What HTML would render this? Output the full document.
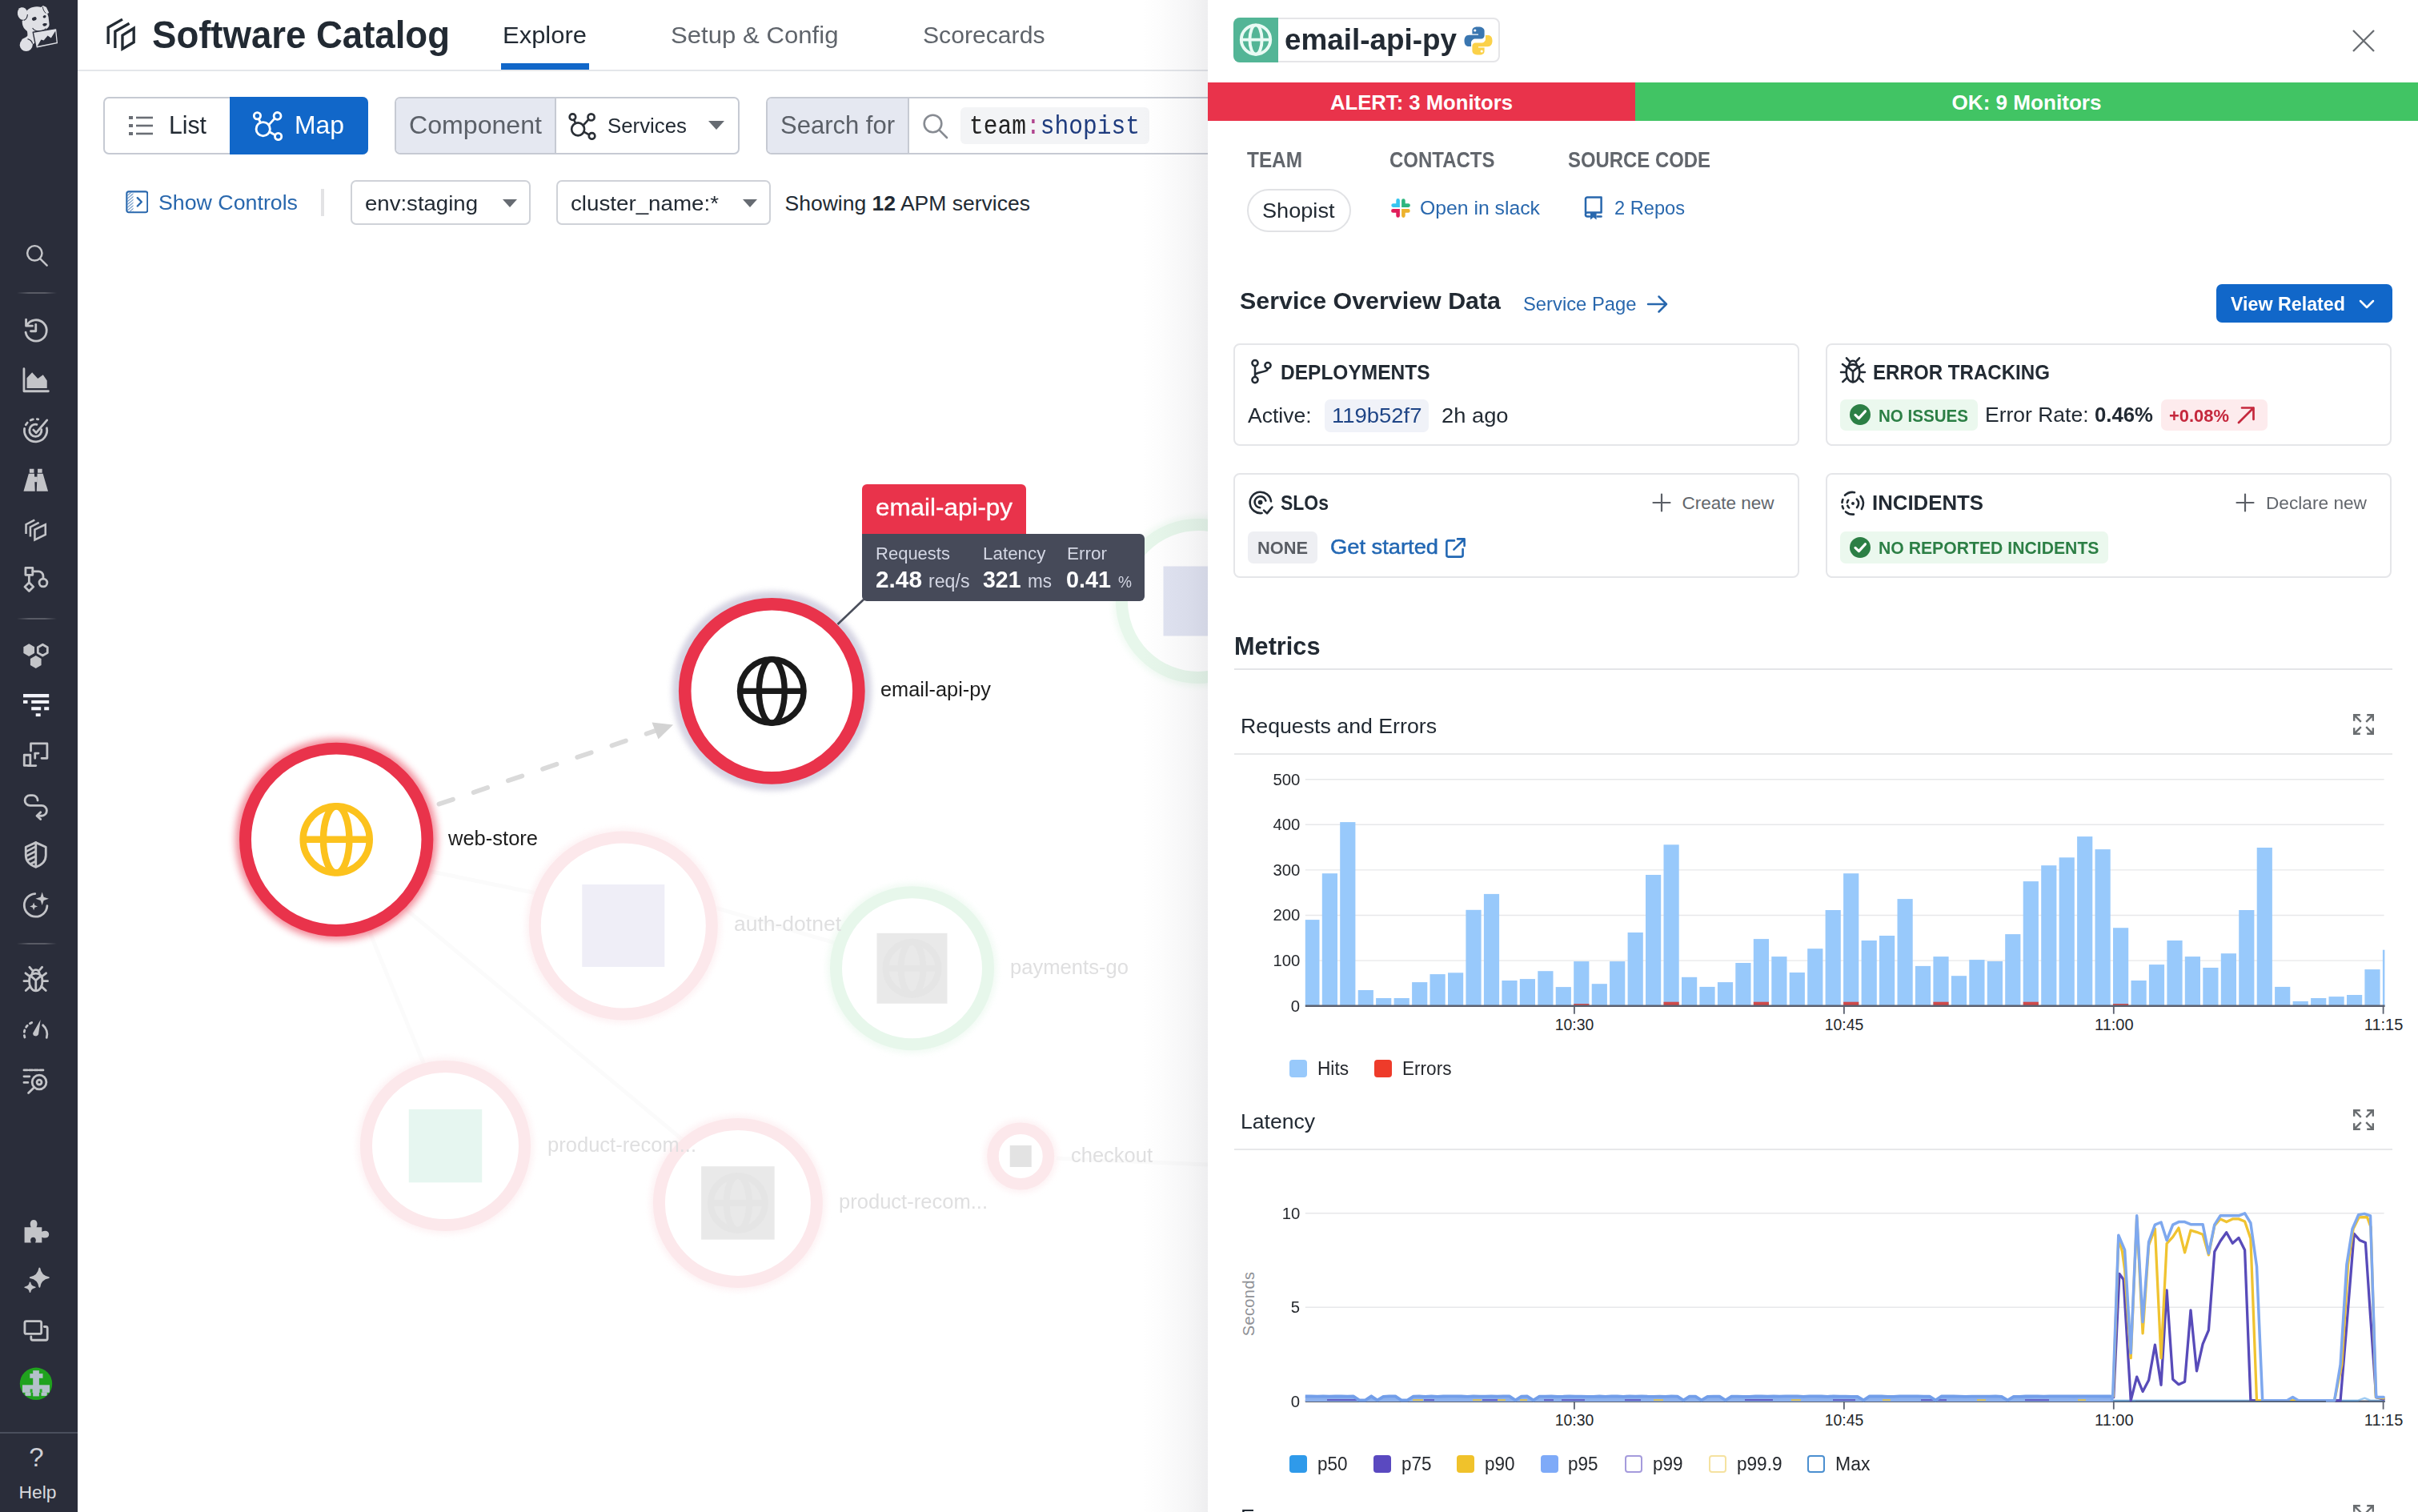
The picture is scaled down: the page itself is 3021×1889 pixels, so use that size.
<!DOCTYPE html>
<html><head><meta charset="utf-8"><title>Software Catalog</title>
<style>
html,body{margin:0;padding:0;}
body{width:3021px;height:1889px;overflow:hidden;background:#fff;position:relative;font-family:"Liberation Sans",sans-serif;}
body>div,body>span,body>svg{position:absolute;box-sizing:border-box;}
body>span{white-space:nowrap;line-height:normal;}
b{font-weight:700;}
</style></head><body>
<div style="left:0.0px;top:0.0px;width:97.0px;height:1889.0px;background:#2a2d3a;"></div>
<svg style="left:0.0px;top:0.0px;" width="97" height="80" viewBox="0 0 97 80">
<g fill="#dfe0e5">
<ellipse cx="28.2" cy="17" rx="6.3" ry="7.9" transform="rotate(-12 28.2 17)"/>
<path d="M33.5 13.6 C35.5 11 38.5 9.6 41 9 C44 8.2 48 8 51.3 9.1 L53.8 7 L57.9 9.1 L61.2 16.1 L59.1 17 C60.2 19.5 60.8 21.5 60.8 23.2 L61.6 30.6 C61.4 32.4 61 33.4 60.4 33.9 L57.9 36.4 L50 41 L45 41.5 L44 53 L40 56 L27 52 L27.5 49 C30 47.5 33 46.5 34.3 44.7 C34.6 42.5 34.2 40.5 33.9 38.9 C31 36.5 29.3 35 28.9 33.1 C28 31 27.6 28.5 27.7 26 C30 25.5 32.5 23 33.8 20 Z"/>
<ellipse cx="32.7" cy="56.2" rx="8" ry="7.9"/>
</g>
<path d="M34.5 48.6 C37.6 49.4 39.8 51.6 40.6 54.6" fill="none" stroke="#2a2d3a" stroke-width="1.2"/>
<path d="M34.4 18 C34.2 21.5 32.4 24.4 29.8 25.4" fill="none" stroke="#2a2d3a" stroke-width="1.1"/>
<path d="M53.4 8.6 C53.6 11.5 55 14.5 57.4 16.6" fill="none" stroke="#2a2d3a" stroke-width="1"/>
<ellipse cx="42.8" cy="23.5" rx="2.9" ry="2.2" fill="#2a2d3a" transform="rotate(-20 42.8 23.5)"/>
<ellipse cx="55.6" cy="20.8" rx="2" ry="1.7" fill="#2a2d3a" transform="rotate(-20 55.6 20.8)"/>
<path d="M53.2 30.2 C54.6 28.8 57.6 28.6 59 29.8 C58.4 31.8 56.6 33 55.4 32.8 C54.2 32.6 53.4 31.6 53.2 30.2 Z" fill="#2a2d3a"/>
<path d="M40.6 35 C42.6 38 46.6 39.6 51 38.8 C54 38.2 56.4 37.2 57.4 35.4" fill="none" stroke="#2a2d3a" stroke-width="1.1"/>
<path d="M41.2 40.2 L70.8 35.4 L72.8 54.8 L45.2 60.4 Z" fill="#dfe0e5" stroke="#2a2d3a" stroke-width="1.4" stroke-linejoin="round"/>
<path d="M46.6 57.8 L51.4 49.4 L54.6 50.6 L59.6 44.6 L63.8 47.6 L69.2 38.8 L70.6 53 Z" fill="#2a2d3a"/>
</svg>
<svg style="left:27.5px;top:301.2px;" width="35" height="35" viewBox="0 0 24 24"><circle cx="10.5" cy="10.5" r="6.3" fill="none" stroke="#c3c4c8" stroke-width="1.7" stroke-linecap="round" stroke-linejoin="round" stroke-width="1.9"/><path d="M15.3 15.3 L21 21" fill="none" stroke="#c3c4c8" stroke-width="1.7" stroke-linecap="round" stroke-linejoin="round" stroke-width="1.9"/></svg>
<div style="left:21.0px;top:364.5px;width:50.0px;height:2.0px;background:linear-gradient(90deg,rgba(255,255,255,0),rgba(255,255,255,.22) 30%,rgba(255,255,255,.22) 70%,rgba(255,255,255,0));"></div>
<svg style="left:25.2px;top:393.2px;" width="39.5" height="39.5" viewBox="0 0 24 24"><path d="M5.2 8.2 A8 8 0 1 1 4.3 13.5" fill="none" stroke="#c3c4c8" stroke-width="1.7" stroke-linecap="round" stroke-linejoin="round"/><path d="M4.6 3.8 V8.6 H9.4" fill="none" stroke="#c3c4c8" stroke-width="1.7" stroke-linecap="round" stroke-linejoin="round"/><path d="M12 7.5 V12.6 H8.2" fill="none" stroke="#c3c4c8" stroke-width="1.7" stroke-linecap="round" stroke-linejoin="round"/></svg>
<svg style="left:25.2px;top:455.2px;" width="39.5" height="39.5" viewBox="0 0 24 24"><path d="M3 3.5 V20.5 H21.5" fill="none" stroke="#c3c4c8" stroke-width="1.7" stroke-linecap="round" stroke-linejoin="round" stroke-width="1.5"/><path d="M5.2 18.3 V10.5 L9.2 6.2 L13.5 11 L17.5 8 L20.5 12.5 V18.3 Z" fill="#c3c4c8"/></svg>
<svg style="left:25.2px;top:518.2px;" width="39.5" height="39.5" viewBox="0 0 24 24"><path d="M20.3 10.2 A8.6 8.6 0 1 1 13.8 3.6" fill="none" stroke="#c3c4c8" stroke-width="1.7" stroke-linecap="round" stroke-linejoin="round" stroke-dasharray="30 3 2 3 2 3 40"/><path d="M16.3 11.3 A4.6 4.6 0 1 1 12.7 7.5" fill="none" stroke="#c3c4c8" stroke-width="1.7" stroke-linecap="round" stroke-linejoin="round"/><path d="M10.2 11.6 L12.3 13.8 L20.5 4.2" fill="none" stroke="#c3c4c8" stroke-width="1.7" stroke-linecap="round" stroke-linejoin="round"/></svg>
<svg style="left:25.2px;top:580.2px;" width="39.5" height="39.5" viewBox="0 0 24 24"><path d="M7.2 3.5 h3.4 v3 h-3.4z M13.4 3.5 h3.4 v3 h-3.4z" fill="#c3c4c8"/><path d="M6.6 7.2 h4.3 l.5 13.3 h-8.7 z M13.1 7.2 h4.3 l3.9 13.3 h-8.7 z" fill="#c3c4c8"/><path d="M10.8 9.5 h2.4 v4 h-2.4z" fill="#c3c4c8"/></svg>
<svg style="left:28.0px;top:644.6px;" width="34" height="34" viewBox="0 0 24 24"><g fill="none" stroke="#c3c4c8" stroke-width="1.8" stroke-linejoin="miter"><path d="M3.2 15.5 V7.2 L10.8 3.2"/><path d="M7 18 V9.5 L14.6 5.5"/><path d="M10.9 11.8 L20.3 7.3 V16.2 L10.9 20.8 Z"/></g></svg>
<svg style="left:25.2px;top:704.2px;" width="39.5" height="39.5" viewBox="0 0 24 24"><rect x="4.2" y="3.3" width="5.4" height="5.4" fill="none" stroke="#c3c4c8" stroke-width="1.7" stroke-linecap="round" stroke-linejoin="round"/><path d="M6.9 8.7 V14.2" fill="none" stroke="#c3c4c8" stroke-width="1.7" stroke-linecap="round" stroke-linejoin="round"/><path d="M6.9 14.4 L10.2 17.7 L6.9 21 L3.6 17.7 Z" fill="none" stroke="#c3c4c8" stroke-width="1.7" stroke-linecap="round" stroke-linejoin="round"/><path d="M9.6 6 H14 A3.6 3.6 0 0 1 17.6 9.6 V11.4" fill="none" stroke="#c3c4c8" stroke-width="1.7" stroke-linecap="round" stroke-linejoin="round"/><circle cx="17.6" cy="14.6" r="3" fill="none" stroke="#c3c4c8" stroke-width="1.7" stroke-linecap="round" stroke-linejoin="round"/></svg>
<div style="left:21.0px;top:771.5px;width:50.0px;height:2.0px;background:linear-gradient(90deg,rgba(255,255,255,0),rgba(255,255,255,.22) 30%,rgba(255,255,255,.22) 70%,rgba(255,255,255,0));"></div>
<svg style="left:25.2px;top:798.8px;" width="39.5" height="39.5" viewBox="0 0 24 24"><polygon points="10.96,10.40 6.80,12.80 2.64,10.40 2.64,5.60 6.80,3.20 10.96,5.60" fill="#c3c4c8"/><polygon points="20.84,10.10 17.20,12.20 13.56,10.10 13.56,5.90 17.20,3.80 20.84,5.90" fill="none" stroke="#c3c4c8" stroke-width="1.7" stroke-linecap="round" stroke-linejoin="round"/><polygon points="16.16,19.40 12.00,21.80 7.84,19.40 7.84,14.60 12.00,12.20 16.16,14.60" fill="#c3c4c8"/></svg>
<svg style="left:29.0px;top:867.0px;" width="33" height="29" viewBox="0 0 33 29"><g fill="#f3f4fb"><rect x="0" y="0" width="32.2" height="4.3"/><rect x="0" y="7.9" width="5.5" height="4"/><rect x="10.2" y="7.9" width="22" height="4"/><rect x="10.2" y="16.2" width="12" height="4.1"/><rect x="26.2" y="16.2" width="6" height="4.1"/><rect x="15.7" y="24.3" width="6" height="3.8"/></g></svg>
<svg style="left:25.2px;top:923.2px;" width="39.5" height="39.5" viewBox="0 0 24 24"><path d="M8.2 9.2 V3.6 H20.6 V14.8 H16.4" fill="none" stroke="#c3c4c8" stroke-width="1.7" stroke-linecap="round" stroke-linejoin="round" stroke-linejoin="miter"/><path d="M12 20.4 H6.2" fill="none" stroke="#c3c4c8" stroke-width="1.7" stroke-linecap="round" stroke-linejoin="round"/><rect x="3.2" y="12.3" width="4.6" height="8" fill="none" stroke="#c3c4c8" stroke-width="1.7" stroke-linecap="round" stroke-linejoin="round" stroke-linejoin="miter"/><path d="M11.4 14.8 V11 H14" fill="none" stroke="#c3c4c8" stroke-width="1.7" stroke-linecap="round" stroke-linejoin="round" stroke-linejoin="miter"/></svg>
<svg style="left:25.2px;top:986.8px;" width="39.5" height="39.5" viewBox="0 0 24 24"><path d="M12 11.8 H7.6 A3.9 3.9 0 0 1 7.6 4 H9.5 A3.9 3.9 0 0 1 13.4 7.9 M12 11.8 H16.4 A3.9 3.9 0 0 1 16.4 19.6 H13.2" fill="none" stroke="#c3c4c8" stroke-width="1.7" stroke-linecap="round" stroke-linejoin="round"/><path d="M15.6 16.8 L12.8 19.6 L15.6 22.2" fill="none" stroke="#c3c4c8" stroke-width="1.7" stroke-linecap="round" stroke-linejoin="round"/></svg>
<svg style="left:25.2px;top:1048.2px;" width="39.5" height="39.5" viewBox="0 0 24 24"><path d="M12 2.8 L19.6 6.2 V12.4 C19.6 16.6 16.4 19.8 12 21.4 C7.6 19.8 4.4 16.6 4.4 12.4 V6.2 Z" fill="none" stroke="#c3c4c8" stroke-width="1.7" stroke-linecap="round" stroke-linejoin="round"/><path d="M12 2.8 V21.4" fill="none" stroke="#c3c4c8" stroke-width="1.7" stroke-linecap="round" stroke-linejoin="round"/><path d="M5 9.5 L11.6 6 M4.8 13 L11.6 9.6 M5.8 16.2 L11.6 13.3 M8.2 19 L11.6 17.2" fill="none" stroke="#c3c4c8" stroke-width="1.7" stroke-linecap="round" stroke-linejoin="round" stroke-width="1.4"/></svg>
<svg style="left:25.2px;top:1110.8px;" width="39.5" height="39.5" viewBox="0 0 24 24"><path d="M20.6 12.6 A8.7 8.7 0 1 1 11.4 3.4" fill="none" stroke="#c3c4c8" stroke-width="1.7" stroke-linecap="round" stroke-linejoin="round"/><path d="M16.8 2.2 L18 5.9 L21.8 7.2 L18 8.5 L16.8 12.2 L15.6 8.5 L11.8 7.2 L15.6 5.9 Z" fill="#c3c4c8"/><path d="M10.4 10 L11.2 12.2 L13.4 13 L11.2 13.8 L10.4 16 L9.6 13.8 L7.4 13 L9.6 12.2 Z" fill="#c3c4c8"/></svg>
<div style="left:21.0px;top:1177.5px;width:50.0px;height:2.0px;background:linear-gradient(90deg,rgba(255,255,255,0),rgba(255,255,255,.22) 30%,rgba(255,255,255,.22) 70%,rgba(255,255,255,0));"></div>
<svg style="left:25.2px;top:1204.2px;" width="39.5" height="39.5" viewBox="0 0 24 24"><g fill="none" stroke="#c3c4c8" stroke-width="1.7" stroke-linecap="round" stroke-linejoin="round"><path d="M12 7.4 C15.4 7.4 17 9.8 17 13.2 C17 17.2 15 20.6 12 20.6 C9 20.6 7 17.2 7 13.2 C7 9.8 8.6 7.4 12 7.4 Z"/><path d="M12 12.6 V20.4 M8 9.2 L12 12.6 L16 9.2"/><path d="M9.3 7.8 C9.3 5.6 10.3 4.6 12 4.6 C13.7 4.6 14.7 5.6 14.7 7.8"/><path d="M9 4.6 L7.2 2.6 M15 4.6 L16.8 2.6"/><path d="M7 13.2 H3 M17 13.2 H21"/><path d="M7.6 9.8 L4.2 7.2 M16.4 9.8 L19.8 7.2"/><path d="M7.8 17.2 L4.4 20.4 M16.2 17.2 L19.6 20.4"/></g></svg>
<svg style="left:25.2px;top:1266.8px;" width="39.5" height="39.5" viewBox="0 0 24 24"><path d="M3.6 17.6 A9 9 0 0 1 10.4 6" fill="none" stroke="#c3c4c8" stroke-width="1.7" stroke-linecap="round" stroke-linejoin="round" stroke-width="2.7" stroke-dasharray="1.5 2.5" stroke-linecap="butt"/><path d="M17.4 8.4 A9 9 0 0 1 20.2 17.8" fill="none" stroke="#c3c4c8" stroke-width="1.7" stroke-linecap="round" stroke-linejoin="round" stroke-width="2.9"/><path d="M9.8 14.4 L15.6 4.2 L14 15.4 A2.2 2.2 0 0 1 9.8 14.4 Z" fill="#c3c4c8"/></svg>
<svg style="left:25.2px;top:1329.8px;" width="39.5" height="39.5" viewBox="0 0 24 24"><path d="M3 4.2 H17.6" fill="none" stroke="#c3c4c8" stroke-width="1.7" stroke-linecap="round" stroke-linejoin="round" stroke-width="2.2" stroke-dasharray="2.6 1.4" stroke-linecap="butt"/><path d="M3 9 H7.2 M3 13.6 H6" fill="none" stroke="#c3c4c8" stroke-width="1.7" stroke-linecap="round" stroke-linejoin="round" stroke-width="2.2" stroke-linecap="butt"/><circle cx="14.6" cy="13.4" r="5.4" fill="none" stroke="#c3c4c8" stroke-width="1.7" stroke-linecap="round" stroke-linejoin="round" stroke-width="1.9"/><circle cx="14.6" cy="13.4" r="1.8" fill="none" stroke="#c3c4c8" stroke-width="1.7" stroke-linecap="round" stroke-linejoin="round" stroke-width="1.4"/><path d="M10.6 17.4 L6.4 21.6" fill="none" stroke="#c3c4c8" stroke-width="1.7" stroke-linecap="round" stroke-linejoin="round" stroke-width="2.2"/></svg>
<svg style="left:25.2px;top:1518.2px;" width="39.5" height="39.5" viewBox="0 0 24 24"><path d="M3.4 9.2 H8.3 C7 6.2 8 3.6 10.4 3.6 C12.8 3.6 13.8 6.2 12.5 9.2 H16.6 V12.6 C19.6 11.3 22 12.3 22 14.7 C22 17.1 19.6 18.1 16.6 16.8 V21 H11.6 C12.6 18.6 11.8 16.8 10 16.8 C8.2 16.8 7.4 18.6 8.4 21 H3.4 Z" fill="#c3c4c8"/></svg>
<svg style="left:25.2px;top:1579.8px;" width="39.5" height="39.5" viewBox="0 0 24 24"><path d="M14.8 2.8 Q15.6 8.6 21.8 9.8 Q15.6 11 14.8 16.8 Q14 11 7.8 9.8 Q14 8.6 14.8 2.8 Z" fill="#c3c4c8" stroke="#c3c4c8" stroke-width="1.2" stroke-linejoin="round"/><path d="M7.6 13.6 Q8 16.6 11.4 17.2 Q8 17.8 7.6 20.8 Q7.2 17.8 3.8 17.2 Q7.2 16.6 7.6 13.6 Z" fill="#c3c4c8" stroke="#c3c4c8" stroke-width="1" stroke-linejoin="round"/></svg>
<svg style="left:25.2px;top:1642.8px;" width="39.5" height="39.5" viewBox="0 0 24 24"><rect x="3.6" y="4.6" width="12.6" height="9.6" rx="1.2" fill="none" stroke="#c3c4c8" stroke-width="1.7" stroke-linecap="round" stroke-linejoin="round" stroke-width="1.5"/><path d="M8.4 16.4 V17.8 A1.2 1.2 0 0 0 9.6 19 H19.6 A1.2 1.2 0 0 0 20.8 17.8 V10 A1.2 1.2 0 0 0 19.6 8.8 H18.4" fill="none" stroke="#c3c4c8" stroke-width="1.7" stroke-linecap="round" stroke-linejoin="round" stroke-width="1.5"/></svg>
<svg style="left:24.0px;top:1708.0px;" width="42" height="42" viewBox="0 0 42 42"><defs><clipPath id="avc"><circle cx="21" cy="20.8" r="20"/></clipPath></defs><circle cx="21" cy="20.8" r="20.2" fill="#20a21e"/>
<g fill="#b4c1ca" clip-path="url(#avc)"><rect x="17.2" y="4.2" width="7.7" height="19"/><rect x="13.3" y="8.1" width="16.2" height="5.7"/><rect x="4" y="22.3" width="34" height="9.5"/><rect x="7.4" y="31.5" width="7.2" height="4.4"/><rect x="27.5" y="31.5" width="7.2" height="4.4"/><rect x="17.2" y="30" width="7.7" height="6.4"/></g>
<g fill="#2aad28"><rect x="13.6" y="27.4" width="3" height="4.4"/><rect x="25.6" y="27.4" width="3" height="4.4"/></g></svg>
<div style="left:0.0px;top:1789.0px;width:97.0px;height:1.5px;background:#4a4e5c;"></div>
<span style="left:45.5px;transform:translateX(-50%);top:1801.6px;font-size:33px;color:#cfd0d6;">?</span>
<span style="left:47.0px;transform:translateX(-50%) scaleX(1.0155);top:1851.6px;font-size:22.5px;color:#d9dade;">Help</span>
<div style="left:97.0px;top:87.0px;width:1412.0px;height:2.0px;background:#e4e6ea;"></div>
<svg style="left:120.0px;top:10.0px;" width="60" height="64" viewBox="0 0 60 64"><g fill="none" stroke="#232b33" stroke-width="3.05" stroke-linejoin="miter" transform="translate(30.95 33.1) scale(1.1) translate(-30.75 -33.25)"><path d="M16.4 44 V25.2 L32.6 16"/><path d="M24.3 48.6 V29.8 L40.4 20.6"/><path d="M32.6 34.2 L45.5 26.2 V42 L32.6 49.6 Z"/></g></svg>
<span style="left:190.0px;transform:scaleX(0.9488);transform-origin:0 50%;top:16.4px;font-size:48px;font-weight:700;color:#222a33;">Software Catalog</span>
<span style="left:628.0px;transform:scaleX(1.0323);transform-origin:0 50%;top:27.2px;font-size:30px;color:#222a33;">Explore</span>
<div style="left:626.0px;top:79.3px;width:110.0px;height:8.0px;background:#1167c9;"></div>
<span style="left:837.5px;transform:scaleX(1.0382);transform-origin:0 50%;top:27.2px;font-size:30px;color:#5f646b;">Setup &amp; Config</span>
<span style="left:1152.5px;transform:scaleX(1.0050);transform-origin:0 50%;top:27.2px;font-size:30px;color:#5f646b;">Scorecards</span>
<div style="left:129.0px;top:121.0px;width:331.0px;height:71.5px;border:2px solid #c6cad3;border-radius:7px;background:#fff;"></div>
<div style="left:287.0px;top:121.0px;width:173.0px;height:71.5px;background:#1167c9;border-radius:0 7px 7px 0;"></div>
<svg style="left:159.0px;top:142.0px;" width="36" height="30" viewBox="0 0 36 30"><g fill="#6a6e75"><rect x="2" y="3" width="5" height="4"/><rect x="2" y="13" width="5" height="4"/><rect x="2" y="23" width="5" height="4"/><rect x="11" y="3.7" width="21" height="2.6"/><rect x="11" y="13.7" width="21" height="2.6"/><rect x="11" y="23.7" width="21" height="2.6"/></g></svg>
<span style="left:211.0px;transform:scaleX(0.9901);transform-origin:0 50%;top:139.4px;font-size:30.5px;color:#222a33;">List</span>
<svg style="left:314.0px;top:138.0px;" width="40" height="38" viewBox="0 0 37 36"><g fill="none" stroke="#fff" stroke-width="2.7" stroke-linecap="round"><circle cx="13.5" cy="22" r="8.2"/><circle cx="6.6" cy="6.4" r="3.9"/><circle cx="30.4" cy="6.6" r="4.2"/><circle cx="31.4" cy="30.8" r="3.9"/><path d="M8.3 10 L10.4 14.4 M20.2 17.2 L27 9.6 M21 25.4 L27.8 29.2"/></g></svg>
<span style="left:368.0px;transform:scaleX(1.0448);transform-origin:0 50%;top:139.4px;font-size:30.5px;color:#fff;">Map</span>
<div style="left:492.5px;top:121.0px;width:431.0px;height:71.5px;border:2px solid #c6cad3;border-radius:7px;background:#fff;"></div>
<div style="left:494.5px;top:123.0px;width:200.0px;height:67.5px;background:#e5e8f1;border-right:2px solid #c6cad3;border-radius:5px 0 0 5px;"></div>
<span style="left:510.5px;transform:scaleX(1.0527);transform-origin:0 50%;top:139.4px;font-size:30.5px;color:#5b6068;">Component</span>
<svg style="left:709.0px;top:140.0px;" width="36" height="35" viewBox="0 0 37 36"><g fill="none" stroke="#2a2f36" stroke-width="2.7" stroke-linecap="round"><circle cx="13.5" cy="22" r="8.2"/><circle cx="6.6" cy="6.4" r="3.9"/><circle cx="30.4" cy="6.6" r="4.2"/><circle cx="31.4" cy="30.8" r="3.9"/><path d="M8.3 10 L10.4 14.4 M20.2 17.2 L27 9.6 M21 25.4 L27.8 29.2"/></g></svg>
<span style="left:759.0px;transform:scaleX(0.9742);transform-origin:0 50%;top:141.6px;font-size:26.5px;color:#222a33;">Services</span>
<div style="left:885px;top:151px;width:0;height:0;border-left:10.5px solid transparent;border-right:10.5px solid transparent;border-top:11.5px solid #666b72;"></div>
<div style="left:956.5px;top:121.0px;width:620.0px;height:71.5px;border:2px solid #c6cad3;border-radius:7px 0 0 7px;background:#fff;"></div>
<div style="left:958.5px;top:123.0px;width:177.0px;height:67.5px;background:#e5e8f1;border-right:2px solid #c6cad3;border-radius:5px 0 0 5px;"></div>
<span style="left:974.5px;transform:scaleX(1.0162);transform-origin:0 50%;top:139.4px;font-size:30.5px;color:#5b6068;">Search for</span>
<svg style="left:1151.0px;top:140.0px;" width="36" height="36" viewBox="0 0 36 36"><circle cx="14.5" cy="14.5" r="10.8" fill="none" stroke="#878b92" stroke-width="2.6"/><path d="M22.4 22.4 L32 32" stroke="#878b92" stroke-width="2.6" stroke-linecap="round"/></svg>
<div style="left:1200.0px;top:134.0px;width:236.0px;height:46.0px;background:#f3f4f6;border-radius:6px;"></div>
<span style="left:1211.0px;transform:scaleX(0.8963);transform-origin:0 50%;top:140.0px;font-size:33px;color:#222;font-family:'Liberation Mono', monospace;">team<span style="color:#b0448e">:</span><span style="color:#1f3c7e">shopist</span></span>
<svg style="left:156.8px;top:238.2px;" width="28.6" height="28.6" viewBox="0 0 30 30"><defs><pattern id="hat" width="3" height="3" patternUnits="userSpaceOnUse" patternTransform="rotate(50)"><rect width="1.1" height="3" fill="#2867ad" opacity=".75"/></pattern></defs><rect x="1.4" y="1.4" width="27.2" height="27.2" rx="2.5" fill="#fff" stroke="#2867ad" stroke-width="2.2"/><rect x="2.5" y="2.5" width="7.5" height="25" fill="url(#hat)"/><path d="M15.5 9.6 L20.8 15 L15.5 20.4" fill="none" stroke="#2867ad" stroke-width="2.4" stroke-linecap="round" stroke-linejoin="round"/></svg>
<span style="left:198.0px;transform:scaleX(1.0097);transform-origin:0 50%;top:237.9px;font-size:26.5px;color:#2867ad;">Show Controls</span>
<div style="left:401.0px;top:236.3px;width:3.8px;height:33.4px;background:#e3e3e5;"></div>
<div style="left:437.5px;top:224.8px;width:225.0px;height:55.8px;border:2px solid #cfd2d8;border-radius:7px;background:#fff;"></div>
<span style="left:455.5px;transform:scaleX(1.0402);transform-origin:0 50%;top:238.6px;font-size:26.5px;color:#222a33;">env:staging</span>
<div style="left:627.5px;top:248.5px;width:0;height:0;border-left:9.5px solid transparent;border-right:9.5px solid transparent;border-top:10.5px solid #666b72;"></div>
<div style="left:694.8px;top:224.8px;width:268.5px;height:55.8px;border:2px solid #cfd2d8;border-radius:7px;background:#fff;"></div>
<span style="left:712.5px;transform:scaleX(1.0466);transform-origin:0 50%;top:238.6px;font-size:26.5px;color:#222a33;">cluster_name:*</span>
<div style="left:928.3px;top:248.5px;width:0;height:0;border-left:9.5px solid transparent;border-right:9.5px solid transparent;border-top:10.5px solid #666b72;"></div>
<span style="left:980.5px;top:238.6px;font-size:26.5px;color:#222a33;">Showing <b>12</b> APM services</span>
<svg style="left:0.0px;top:0.0px;" width="3021" height="1889" viewBox="0 0 3021 1889"><defs><filter id="g1" x="-30%" y="-30%" width="160%" height="160%"><feGaussianBlur stdDeviation="5"/></filter><filter id="g2" x="-30%" y="-30%" width="160%" height="160%"><feGaussianBlur stdDeviation="3.5"/></filter></defs><path d="M520 1085 L690 1120 M880 1130 L1050 1180 M460 1160 L530 1330 M500 1130 L860 1430 M1320 1447 L1509 1455" stroke="#fbfbfb" stroke-width="5" fill="none"/><circle cx="778.8" cy="1156.5" r="110.5" fill="none" stroke="#fce8eb" stroke-width="23" opacity=".55" filter="url(#g2)"/><circle cx="778.8" cy="1156.5" r="110.5" fill="#fff" stroke="#fce8eb" stroke-width="15"/><rect x="727.3" y="1105.0" width="103" height="103" fill="#efeef7"/><circle cx="1139.5" cy="1209.8" r="95.0" fill="none" stroke="#e7f7eb" stroke-width="23" opacity=".55" filter="url(#g2)"/><circle cx="1139.5" cy="1209.8" r="95.0" fill="#fff" stroke="#e7f7eb" stroke-width="15"/><rect x="1095.5" y="1165.8" width="88" height="88" fill="#e9e9e9"/><circle cx="556.5" cy="1431.6" r="99.0" fill="none" stroke="#fce8eb" stroke-width="23" opacity=".55" filter="url(#g2)"/><circle cx="556.5" cy="1431.6" r="99.0" fill="#fff" stroke="#fce8eb" stroke-width="15"/><rect x="510.75" y="1385.85" width="91.5" height="91.5" fill="#e6f6f0"/><circle cx="921.9" cy="1502.9" r="98.5" fill="none" stroke="#fce8eb" stroke-width="23" opacity=".55" filter="url(#g2)"/><circle cx="921.9" cy="1502.9" r="98.5" fill="#fff" stroke="#fce8eb" stroke-width="15"/><rect x="876.15" y="1457.15" width="91.5" height="91.5" fill="#e9e9e9"/><circle cx="1275.2" cy="1444.5" r="34.75" fill="none" stroke="#fce8eb" stroke-width="22.5" opacity=".55" filter="url(#g2)"/><circle cx="1275.2" cy="1444.5" r="34.75" fill="#fff" stroke="#fce8eb" stroke-width="14.5"/><rect x="1261.7" y="1431.0" width="27" height="27" fill="#e3e3e3"/><circle cx="1497" cy="751" r="95.5" fill="none" stroke="#e7f7eb" stroke-width="23" opacity=".55" filter="url(#g2)"/><circle cx="1497" cy="751" r="95.5" fill="#fff" stroke="#e7f7eb" stroke-width="15"/><rect x="1497.0" y="751.0" width="0" height="0" fill="#fff"/><rect x="1453.5" y="707.5" width="87" height="87" fill="#e1e4f2"/><g fill="none" stroke="#e5e5e5" stroke-width="8"><circle cx="1139.5" cy="1209.8" r="33"/><ellipse cx="1139.5" cy="1209.8" rx="13.86" ry="33"/><path d="M1106.5 1209.8 H1172.5"/></g><g fill="none" stroke="#e5e5e5" stroke-width="8"><circle cx="921.9" cy="1502.9" r="34"/><ellipse cx="921.9" cy="1502.9" rx="14.28" ry="34"/><path d="M887.9 1502.9 H955.9"/></g><path d="M548.5 1004.6 L820 912.6" stroke="#dadada" stroke-width="5.8" stroke-dasharray="18.4 27.2" stroke-linecap="round" fill="none"/><path d="M841 905.5 L814.5 902.5 L822.5 923.5 Z" fill="#d3d3d3"/><circle cx="420.2" cy="1048.8" r="113.7" fill="none" stroke="#e9334b" stroke-width="25" opacity=".55" filter="url(#g1)"/><circle cx="420.2" cy="1048.8" r="113.7" fill="#fff" stroke="#e9334b" stroke-width="14.9"/><g fill="none" stroke="#fcc21d" stroke-width="8.4"><circle cx="420.2" cy="1048.8" r="41.6"/><ellipse cx="420.2" cy="1048.8" rx="16.224" ry="41.6"/><path d="M378.59999999999997 1048.8 H461.8"/></g><circle cx="964.3" cy="863.3" r="113" fill="none" stroke="#c6c4d8" stroke-width="23" opacity=".75" filter="url(#g2)"/><circle cx="964.3" cy="863.3" r="108.6" fill="#fff" stroke="#e9334b" stroke-width="15.6"/><g fill="none" stroke="#1a1a1a" stroke-width="7.4"><circle cx="964.3" cy="863.4" r="39.8"/><ellipse cx="964.3" cy="863.4" rx="15.92" ry="39.8"/><path d="M924.5 863.4 H1004.0999999999999"/></g><path d="M1046.5 780 L1079 749" stroke="#4a4e5b" stroke-width="2.6"/></svg>
<span style="left:1099.5px;transform:scaleX(1.0134);transform-origin:0 50%;top:846.8px;font-size:25px;color:#1c1c1c;">email-api-py</span>
<span style="left:559.5px;transform:scaleX(1.0204);transform-origin:0 50%;top:1033.0px;font-size:25px;color:#1c1c1c;">web-store</span>
<span style="left:917.0px;transform:scaleX(1.0593);transform-origin:0 50%;top:1140.0px;font-size:25px;color:#dfdfe0;">auth-dotnet</span>
<span style="left:1262.0px;transform:scaleX(1.0240);transform-origin:0 50%;top:1194.0px;font-size:25px;color:#dfdfe0;">payments-go</span>
<span style="left:683.5px;transform:scaleX(1.0219);transform-origin:0 50%;top:1416.0px;font-size:25px;color:#dfdfe0;">product-recom...</span>
<span style="left:1047.5px;transform:scaleX(1.0219);transform-origin:0 50%;top:1487.0px;font-size:25px;color:#dfdfe0;">product-recom...</span>
<span style="left:1337.5px;transform:scaleX(1.0194);transform-origin:0 50%;top:1428.5px;font-size:25px;color:#dfdfe0;">checkout</span>
<div style="left:1077.0px;top:605.0px;width:205.0px;height:64.0px;background:#e9334b;border-radius:6px 6px 0 0;"></div>
<span style="left:1094.0px;transform:scaleX(1.0466);transform-origin:0 50%;top:616.6px;font-size:30px;color:#fff;-webkit-text-stroke:.35px #fff;">email-api-py</span>
<div style="left:1077.0px;top:667.0px;width:353.0px;height:83.5px;background:#464a59;border-radius:0 6px 6px 6px;"></div>
<span style="left:1094.0px;transform:scaleX(1.0237);transform-origin:0 50%;top:679.7px;font-size:21.5px;color:#d3d6e3;">Requests</span>
<span style="left:1228.0px;transform:scaleX(1.0423);transform-origin:0 50%;top:679.7px;font-size:21.5px;color:#d3d6e3;">Latency</span>
<span style="left:1332.5px;transform:scaleX(1.0464);transform-origin:0 50%;top:679.7px;font-size:21.5px;color:#d3d6e3;">Error</span>
<span style="left:1094.0px;transform:scaleX(0.9933);transform-origin:0 50%;top:707.1px;font-size:30px;font-weight:700;color:#fff;">2.48</span>
<span style="left:1159.5px;transform:scaleX(0.9856);transform-origin:0 50%;top:713.1px;font-size:23.5px;color:#d3d6e3;">req/s</span>
<span style="left:1228.0px;transform:scaleX(0.9488);transform-origin:0 50%;top:707.1px;font-size:30px;font-weight:700;color:#fff;">321</span>
<span style="left:1284.0px;transform:scaleX(0.9576);transform-origin:0 50%;top:713.1px;font-size:23.5px;color:#d3d6e3;">ms</span>
<span style="left:1331.5px;transform:scaleX(0.9591);transform-origin:0 50%;top:707.1px;font-size:30px;font-weight:700;color:#fff;">0.41</span>
<span style="left:1396.5px;transform:scaleX(0.9552);transform-origin:0 50%;top:716.3px;font-size:20px;color:#d3d6e3;">%</span>
<div style="left:1425.0px;top:0.0px;width:84.0px;height:1889.0px;background:linear-gradient(90deg,rgba(30,30,50,0) 0%,rgba(30,30,50,.012) 30%,rgba(30,30,50,.04) 70%,rgba(30,30,50,.075) 100%);"></div>
<div style="left:1509.0px;top:0.0px;width:1512.0px;height:1889.0px;background:#fff;"></div>
<div style="left:1541.0px;top:22.0px;width:333.0px;height:55.6px;border:2px solid #e5e5e8;border-radius:8px;background:#fff;"></div>
<div style="left:1541.0px;top:22.0px;width:56.0px;height:55.6px;background:#53b596;border-radius:8px 0 0 8px;"></div>
<svg style="left:1548.0px;top:29.0px;" width="42" height="42" viewBox="0 0 42 42"><g fill="none" stroke="#eafaf4" stroke-width="3.9"><circle cx="21" cy="20.6" r="18.2"/><ellipse cx="21" cy="20.6" rx="7.6" ry="18.2"/><path d="M2.8 20.6 H39.2"/></g></svg>
<span style="left:1605.3px;transform:scaleX(0.9958);transform-origin:0 50%;top:29.1px;font-size:37px;font-weight:700;color:#222a33;">email-api-py</span>
<svg style="left:1828.0px;top:31.5px;" width="38" height="38" viewBox="0 0 38 38"><path d="M18.6 1.5 C12 1.5 11.4 4.2 11.4 6.6 V10.4 H19 V11.8 H7.4 C3.6 11.8 1.5 14.6 1.5 19 C1.5 23.4 3.6 26 7 26 H10 V21.6 C10 18.4 12.6 16.4 15.4 16.4 H22.6 C25 16.4 26.6 14.6 26.6 12.4 V6.6 C26.6 3.6 24 1.5 18.6 1.5 Z" fill="#3a76b0"/><circle cx="14.8" cy="6" r="1.6" fill="#fff"/>
<path d="M19.4 36.5 C26 36.5 26.6 33.8 26.6 31.4 V27.6 H19 V26.2 H30.6 C34.4 26.2 36.5 23.4 36.5 19 C36.5 14.6 34.4 12 31 12 H28 V16.4 C28 19.6 25.4 21.6 22.6 21.6 H15.4 C13 21.6 11.4 23.4 11.4 25.6 V31.4 C11.4 34.4 14 36.5 19.4 36.5 Z" fill="#fbd149"/><circle cx="23.2" cy="32" r="1.6" fill="#fff"/></svg>
<svg style="left:2937.0px;top:35.0px;" width="32" height="32" viewBox="0 0 32 32"><path d="M3 3 L29 29 M29 3 L3 29" stroke="#696d72" stroke-width="2.3" stroke-linecap="butt"/></svg>
<div style="left:1509.0px;top:103.0px;width:533.5px;height:47.5px;background:#e9334b;"></div>
<div style="left:2042.5px;top:103.0px;width:978.5px;height:47.5px;background:#41c464;"></div>
<span style="left:1776.0px;transform:translateX(-50%) scaleX(0.9865);top:113.1px;font-size:26px;font-weight:700;color:#fff;">ALERT: 3 Monitors</span>
<span style="left:2532.0px;transform:translateX(-50%) scaleX(1.0035);top:113.1px;font-size:26px;font-weight:700;color:#fff;">OK: 9 Monitors</span>
<span style="left:1557.5px;transform:scaleX(0.9020);transform-origin:0 50%;top:185.3px;font-size:27px;font-weight:700;color:#62666c;">TEAM</span>
<span style="left:1736.0px;transform:scaleX(0.8885);transform-origin:0 50%;top:185.3px;font-size:27px;font-weight:700;color:#62666c;">CONTACTS</span>
<span style="left:1959.0px;transform:scaleX(0.8854);transform-origin:0 50%;top:185.3px;font-size:27px;font-weight:700;color:#62666c;">SOURCE CODE</span>
<div style="left:1557.5px;top:235.5px;width:130.0px;height:54.5px;border:2px solid #e1e2e5;border-radius:28px;background:#fff;"></div>
<span style="left:1577.0px;transform:scaleX(1.0239);transform-origin:0 50%;top:248.1px;font-size:26.5px;color:#222a33;">Shopist</span>
<svg style="left:1737.0px;top:246.5px;" width="26" height="26" viewBox="0 0 26 26"><g stroke-width="4.6" stroke-linecap="round" fill="none">
<path d="M9.6 3.4 V9.6 H3.6" stroke="#36c5f0"/><path d="M22.6 9.6 H16.4 V3.6" stroke="#2eb67d"/>
<path d="M16.4 22.6 V16.4 H22.4" stroke="#ecb22e"/><path d="M3.4 16.4 H9.6 V22.4" stroke="#e01e5a"/></g></svg>
<span style="left:1774.0px;transform:scaleX(1.0105);transform-origin:0 50%;top:245.9px;font-size:24.5px;color:#2867ad;">Open in slack</span>
<svg style="left:1976.0px;top:244.0px;" width="29" height="32" viewBox="0 0 29 32"><path d="M5 21.4 V4.6 A2.2 2.2 0 0 1 7.2 2.4 H24.6 V21.6 H7.4 A2.5 2.5 0 0 0 7.4 26.6 H10 M19.6 26.6 H24.6" fill="none" stroke="#2867ad" stroke-width="2.5" stroke-linejoin="round" stroke-linecap="round"/><path d="M11 22 V30.4 L14.8 27.4 L18.6 30.4 V22 Z" fill="#2867ad"/></svg>
<span style="left:2017.0px;transform:scaleX(0.9642);transform-origin:0 50%;top:245.9px;font-size:24.5px;color:#2867ad;">2 Repos</span>
<span style="left:1549.0px;transform:scaleX(1.0128);transform-origin:0 50%;top:359.4px;font-size:30px;font-weight:700;color:#222a33;">Service Overview Data</span>
<span style="left:1902.5px;transform:scaleX(0.9709);transform-origin:0 50%;top:365.9px;font-size:24.5px;color:#2867ad;">Service Page</span>
<svg style="left:2056.0px;top:366.0px;" width="30" height="28" viewBox="0 0 30 28"><path d="M3 14 H26 M16.5 4.5 L26 14 L16.5 23.5" fill="none" stroke="#2867ad" stroke-width="2.5" stroke-linecap="round" stroke-linejoin="round"/></svg>
<div style="left:2769.0px;top:355.0px;width:220.0px;height:48.0px;background:#1167c9;border-radius:7px;"></div>
<span style="left:2787.0px;transform:scaleX(0.9489);transform-origin:0 50%;top:365.9px;font-size:24.5px;font-weight:700;color:#fff;">View Related</span>
<svg style="left:2946.0px;top:369.0px;" width="22" height="22" viewBox="0 0 22 22"><path d="M3 7 L11 15 L19 7" fill="none" stroke="#fff" stroke-width="2.5" stroke-linecap="round" stroke-linejoin="round"/></svg>
<div style="left:1540.8px;top:428.6px;width:707.5px;height:128.2px;border:2px solid #e5e6e9;border-radius:8px;background:#fff;"></div>
<div style="left:2280.8px;top:428.6px;width:707.5px;height:128.2px;border:2px solid #e5e6e9;border-radius:8px;background:#fff;"></div>
<div style="left:1540.8px;top:590.5px;width:707.5px;height:131.0px;border:2px solid #e5e6e9;border-radius:8px;background:#fff;"></div>
<div style="left:2280.8px;top:590.5px;width:707.5px;height:131.0px;border:2px solid #e5e6e9;border-radius:8px;background:#fff;"></div>
<svg style="left:1560.0px;top:447.0px;" width="32" height="34" viewBox="0 0 32 34"><g fill="none" stroke="#222a33" stroke-width="2.5"><circle cx="8" cy="6.6" r="3.6"/><circle cx="8" cy="27.6" r="3.6"/><circle cx="24" cy="9.6" r="3.6"/><path d="M8 10.2 V24 M8 22 C8 17 24 19 24 13.2"/></g></svg>
<span style="left:1600.0px;transform:scaleX(0.9423);transform-origin:0 50%;top:449.8px;font-size:26px;font-weight:700;color:#222a33;">DEPLOYMENTS</span>
<span style="left:1558.5px;transform:scaleX(1.0188);transform-origin:0 50%;top:503.8px;font-size:26px;color:#222a33;">Active:</span>
<div style="left:1655.0px;top:498.5px;width:129.5px;height:41.5px;background:#f0f2f8;border-radius:7px;"></div>
<span style="left:1663.5px;transform:scaleX(1.0562);transform-origin:0 50%;top:503.8px;font-size:26px;color:#1f4586;">119b52f7</span>
<span style="left:1801.0px;transform:scaleX(1.0499);transform-origin:0 50%;top:503.8px;font-size:26px;color:#222a33;">2h ago</span>
<svg style="left:2295.0px;top:442.9px;" width="40" height="40" viewBox="0 0 24 24"><g fill="none" stroke="#222a33" stroke-width="1.55" stroke-linecap="round" stroke-linejoin="round"><path d="M12 7.4 C15.4 7.4 17 9.8 17 13.2 C17 17.2 15 20.6 12 20.6 C9 20.6 7 17.2 7 13.2 C7 9.8 8.6 7.4 12 7.4 Z"/><path d="M12 12.6 V20.4 M8 9.2 L12 12.6 L16 9.2"/><path d="M9.3 7.8 C9.3 5.6 10.3 4.6 12 4.6 C13.7 4.6 14.7 5.6 14.7 7.8"/><path d="M9 4.6 L7.2 2.6 M15 4.6 L16.8 2.6"/><path d="M7 13.2 H3 M17 13.2 H21"/><path d="M7.6 9.8 L4.2 7.2 M16.4 9.8 L19.8 7.2"/><path d="M7.8 17.2 L4.4 20.4 M16.2 17.2 L19.6 20.4"/></g></svg>
<span style="left:2340.0px;transform:scaleX(0.9272);transform-origin:0 50%;top:449.8px;font-size:26px;font-weight:700;color:#222a33;">ERROR TRACKING</span>
<div style="left:2299.0px;top:498.5px;width:172.0px;height:39.5px;background:#ebf8ee;border-radius:7px;"></div>
<svg style="left:2311.0px;top:505.0px;" width="26" height="26" viewBox="0 0 26 26"><circle cx="13" cy="13" r="13" fill="#2c7f45"/><path d="M7 13.4 L11.4 17.6 L19.4 8.8" fill="none" stroke="#fff" stroke-width="3.2" stroke-linecap="round" stroke-linejoin="round"/></svg>
<span style="left:2347.0px;transform:scaleX(0.9141);transform-origin:0 50%;top:506.8px;font-size:22.5px;font-weight:700;color:#2c7f45;">NO ISSUES</span>
<span style="left:2480.0px;transform:scaleX(1.0184);transform-origin:0 50%;top:502.6px;font-size:26px;color:#222a33;">Error Rate:</span>
<span style="left:2616.5px;transform:scaleX(0.9900);transform-origin:0 50%;top:502.6px;font-size:26px;font-weight:700;color:#222a33;">0.46%</span>
<div style="left:2699.5px;top:498.5px;width:133.0px;height:39.5px;background:#fdebed;border-radius:7px;"></div>
<span style="left:2710.0px;transform:scaleX(0.9969);transform-origin:0 50%;top:506.7px;font-size:22px;font-weight:700;color:#c5283d;">+0.08%</span>
<svg style="left:2794.0px;top:506.0px;" width="25" height="25" viewBox="0 0 25 25"><path d="M3 22 L21.5 3.5 M7 3.5 H21.5 V18" fill="none" stroke="#c5283d" stroke-width="2.7" stroke-linecap="round" stroke-linejoin="round"/></svg>
<svg style="left:1559.0px;top:612.0px;" width="33" height="33" viewBox="0 0 33 33"><g fill="none" stroke="#222a33" stroke-width="2.6" stroke-linecap="round"><path d="M29 14.4 A13.2 13.2 0 1 0 17.6 29"/><path d="M22.4 13.6 A7 7 0 1 0 15.2 22.2"/><circle cx="15.6" cy="15.6" r="1.6" fill="#222a33"/><path d="M20 25.6 L24 29.4 L30.4 21.6" stroke-linejoin="round"/></g></svg>
<span style="left:1599.5px;transform:scaleX(0.8834);transform-origin:0 50%;top:613.4px;font-size:26px;font-weight:700;color:#222a33;">SLOs</span>
<svg style="left:2063.5px;top:615.5px;" width="24" height="24" viewBox="0 0 24 24"><path d="M12 1.5 V22.5 M1.5 12 H22.5" stroke="#5b5f66" stroke-width="2.2" stroke-linecap="round"/></svg>
<span style="left:2101.5px;top:615.8px;font-size:22.5px;color:#62666c;">Create new</span>
<div style="left:1559.0px;top:664.0px;width:86.5px;height:39.5px;background:#eeeff3;border-radius:7px;"></div>
<span style="left:1571.0px;transform:scaleX(0.9690);transform-origin:0 50%;top:671.8px;font-size:22.5px;font-weight:700;color:#595d64;">NONE</span>
<span style="left:1662.0px;transform:scaleX(1.0298);transform-origin:0 50%;top:668.1px;font-size:26.5px;color:#2267b3;-webkit-text-stroke:.5px #2267b3;">Get started</span>
<svg style="left:1805.0px;top:670.5px;" width="27" height="27" viewBox="0 0 27 27"><path d="M12 4.4 H4.4 A2 2 0 0 0 2.4 6.4 V22.6 A2 2 0 0 0 4.4 24.6 H20.6 A2 2 0 0 0 22.6 22.6 V15" fill="none" stroke="#2267b3" stroke-width="2.6" stroke-linecap="round"/><path d="M16 2.4 H24.6 V11 M24 3 L11.4 15.6" fill="none" stroke="#2267b3" stroke-width="2.6" stroke-linecap="round" stroke-linejoin="round"/></svg>
<svg style="left:2299.0px;top:612.0px;" width="33" height="33" viewBox="0 0 33 33"><g fill="none" stroke="#222a33" stroke-width="2.6" stroke-linecap="round"><circle cx="16" cy="17" r="2" fill="#222a33" stroke="none"/><path d="M20.8 11.6 A7.2 7.2 0 0 1 21 22"/><path d="M11.2 22.4 A7.2 7.2 0 0 1 11 11.8" stroke-dasharray="3.4 3.6"/><path d="M25.6 8 A13 13 0 0 1 26.8 24"/><path d="M18 3.2 A13.6 13.6 0 0 0 6 6.8" /><path d="M3.4 12 A13.6 13.6 0 0 0 4 23.4" stroke-dasharray="4 4.4"/><path d="M7 27.4 A13.6 13.6 0 0 0 17 30.6"/></g></svg>
<span style="left:2339.0px;transform:scaleX(0.9920);transform-origin:0 50%;top:613.4px;font-size:26px;font-weight:700;color:#222a33;">INCIDENTS</span>
<svg style="left:2792.5px;top:615.5px;" width="24" height="24" viewBox="0 0 24 24"><path d="M12 1.5 V22.5 M1.5 12 H22.5" stroke="#5b5f66" stroke-width="2.2" stroke-linecap="round"/></svg>
<span style="left:2831.0px;transform:scaleX(1.0075);transform-origin:0 50%;top:615.8px;font-size:22.5px;color:#62666c;">Declare new</span>
<div style="left:2299.0px;top:664.0px;width:335.0px;height:39.5px;background:#ebf8ee;border-radius:7px;"></div>
<svg style="left:2311.0px;top:670.5px;" width="26" height="26" viewBox="0 0 26 26"><circle cx="13" cy="13" r="13" fill="#2c7f45"/><path d="M7 13.4 L11.4 17.6 L19.4 8.8" fill="none" stroke="#fff" stroke-width="3.2" stroke-linecap="round" stroke-linejoin="round"/></svg>
<span style="left:2347.0px;transform:scaleX(0.9418);transform-origin:0 50%;top:671.8px;font-size:22.5px;font-weight:700;color:#2c7f45;">NO REPORTED INCIDENTS</span>
<span style="left:1541.5px;transform:scaleX(0.9594);transform-origin:0 50%;top:789.1px;font-size:32px;font-weight:700;color:#222a33;">Metrics</span>
<div style="left:1541.5px;top:835.0px;width:1447.0px;height:2.0px;background:#e4e5e8;"></div>
<span style="left:1550.0px;transform:scaleX(1.0275);transform-origin:0 50%;top:891.9px;font-size:26px;color:#222a33;">Requests and Errors</span>
<svg style="left:2940.0px;top:892.0px;" width="26" height="26" viewBox="0 0 26 26"><g fill="none" stroke="#696d70" stroke-width="2.4" stroke-linecap="butt" stroke-linejoin="miter"><path d="M1.2 8.8 V1.2 H8.8 M1.8 1.8 L9.8 9.8"/><g transform="translate(26 0) scale(-1 1)"><path d="M1.2 8.8 V1.2 H8.8 M1.8 1.8 L9.8 9.8"/></g><g transform="translate(0 26) scale(1 -1)"><path d="M1.2 8.8 V1.2 H8.8 M1.8 1.8 L9.8 9.8"/></g><g transform="translate(26 26) scale(-1 -1)"><path d="M1.2 8.8 V1.2 H8.8 M1.8 1.8 L9.8 9.8"/></g></g></svg>
<div style="left:1541.5px;top:940.7px;width:1447.0px;height:2.0px;background:#e7e8ea;"></div>
<svg style="left:0.0px;top:0.0px;" width="3021" height="1400" viewBox="0 0 3021 1400"><path d="M1630.8 1200.1 H2978.6" stroke="#e7e8ea" stroke-width="1.4"/><path d="M1630.8 1143.5 H2978.6" stroke="#e7e8ea" stroke-width="1.4"/><path d="M1630.8 1086.9 H2978.6" stroke="#e7e8ea" stroke-width="1.4"/><path d="M1630.8 1030.3 H2978.6" stroke="#e7e8ea" stroke-width="1.4"/><path d="M1630.8 973.7 H2978.6" stroke="#e7e8ea" stroke-width="1.4"/><rect x="1630.8" y="1149.1" width="17.7" height="107.6" fill="#98c9fb"/><rect x="1651.8" y="1091.2" width="19.2" height="165.5" fill="#98c9fb"/><rect x="1674.2" y="1027.1" width="19.2" height="229.6" fill="#98c9fb"/><rect x="1696.7" y="1237.0" width="19.2" height="19.7" fill="#98c9fb"/><rect x="1719.1" y="1247.0" width="19.2" height="9.7" fill="#98c9fb"/><rect x="1741.6" y="1247.0" width="19.2" height="9.7" fill="#98c9fb"/><rect x="1764.1" y="1227.1" width="19.2" height="29.6" fill="#98c9fb"/><rect x="1786.5" y="1217.1" width="19.2" height="39.6" fill="#98c9fb"/><rect x="1809.0" y="1215.3" width="19.2" height="41.4" fill="#98c9fb"/><rect x="1831.4" y="1136.8" width="19.2" height="119.9" fill="#98c9fb"/><rect x="1853.9" y="1116.9" width="19.2" height="139.8" fill="#98c9fb"/><rect x="1876.4" y="1225.0" width="19.2" height="31.7" fill="#98c9fb"/><rect x="1898.8" y="1223.1" width="19.2" height="33.6" fill="#98c9fb"/><rect x="1921.3" y="1213.2" width="19.2" height="43.5" fill="#98c9fb"/><rect x="1943.7" y="1233.1" width="19.2" height="23.6" fill="#98c9fb"/><rect x="1966.2" y="1201.1" width="19.2" height="55.6" fill="#98c9fb"/><rect x="1966.2" y="1254.1" width="19.2" height="2.6" fill="#cf4a4a"/><rect x="1988.7" y="1229.2" width="19.2" height="27.5" fill="#98c9fb"/><rect x="2011.1" y="1201.1" width="19.2" height="55.6" fill="#98c9fb"/><rect x="2033.6" y="1165.0" width="19.2" height="91.7" fill="#98c9fb"/><rect x="2056.0" y="1093.0" width="19.2" height="163.7" fill="#98c9fb"/><rect x="2078.5" y="1055.3" width="19.2" height="201.4" fill="#98c9fb"/><rect x="2078.5" y="1251.7" width="19.2" height="5.0" fill="#cf4a4a"/><rect x="2101.0" y="1220.8" width="19.2" height="35.9" fill="#98c9fb"/><rect x="2123.4" y="1232.9" width="19.2" height="23.8" fill="#98c9fb"/><rect x="2145.9" y="1227.1" width="19.2" height="29.6" fill="#98c9fb"/><rect x="2168.3" y="1203.0" width="19.2" height="53.7" fill="#98c9fb"/><rect x="2190.8" y="1173.1" width="19.2" height="83.6" fill="#98c9fb"/><rect x="2190.8" y="1251.7" width="19.2" height="5.0" fill="#cf4a4a"/><rect x="2213.3" y="1195.1" width="19.2" height="61.6" fill="#98c9fb"/><rect x="2235.7" y="1215.0" width="19.2" height="41.7" fill="#98c9fb"/><rect x="2258.2" y="1185.2" width="19.2" height="71.5" fill="#98c9fb"/><rect x="2280.6" y="1137.0" width="19.2" height="119.7" fill="#98c9fb"/><rect x="2303.1" y="1091.2" width="19.2" height="165.5" fill="#98c9fb"/><rect x="2303.1" y="1251.7" width="19.2" height="5.0" fill="#cf4a4a"/><rect x="2325.6" y="1175.0" width="19.2" height="81.7" fill="#98c9fb"/><rect x="2348.0" y="1169.0" width="19.2" height="87.7" fill="#98c9fb"/><rect x="2370.5" y="1123.1" width="19.2" height="133.6" fill="#98c9fb"/><rect x="2392.9" y="1206.9" width="19.2" height="49.8" fill="#98c9fb"/><rect x="2415.4" y="1195.1" width="19.2" height="61.6" fill="#98c9fb"/><rect x="2415.4" y="1251.7" width="19.2" height="5.0" fill="#cf4a4a"/><rect x="2437.9" y="1219.2" width="19.2" height="37.5" fill="#98c9fb"/><rect x="2460.3" y="1199.1" width="19.2" height="57.6" fill="#98c9fb"/><rect x="2482.8" y="1201.0" width="19.2" height="55.7" fill="#98c9fb"/><rect x="2505.2" y="1167.1" width="19.2" height="89.6" fill="#98c9fb"/><rect x="2527.7" y="1101.1" width="19.2" height="155.6" fill="#98c9fb"/><rect x="2527.7" y="1251.7" width="19.2" height="5.0" fill="#cf4a4a"/><rect x="2550.2" y="1081.2" width="19.2" height="175.5" fill="#98c9fb"/><rect x="2572.6" y="1071.3" width="19.2" height="185.4" fill="#98c9fb"/><rect x="2595.1" y="1045.1" width="19.2" height="211.6" fill="#98c9fb"/><rect x="2617.5" y="1061.1" width="19.2" height="195.6" fill="#98c9fb"/><rect x="2640.0" y="1159.2" width="19.2" height="97.5" fill="#98c9fb"/><rect x="2640.0" y="1254.1" width="19.2" height="2.6" fill="#cf4a4a"/><rect x="2662.5" y="1225.0" width="19.2" height="31.7" fill="#98c9fb"/><rect x="2684.9" y="1205.1" width="19.2" height="51.6" fill="#98c9fb"/><rect x="2707.4" y="1175.0" width="19.2" height="81.7" fill="#98c9fb"/><rect x="2729.8" y="1195.1" width="19.2" height="61.6" fill="#98c9fb"/><rect x="2752.3" y="1209.0" width="19.2" height="47.7" fill="#98c9fb"/><rect x="2774.8" y="1191.2" width="19.2" height="65.5" fill="#98c9fb"/><rect x="2797.2" y="1137.0" width="19.2" height="119.7" fill="#98c9fb"/><rect x="2819.7" y="1059.0" width="19.2" height="197.7" fill="#98c9fb"/><rect x="2842.1" y="1232.9" width="19.2" height="23.8" fill="#98c9fb"/><rect x="2864.6" y="1250.9" width="19.2" height="5.8" fill="#98c9fb"/><rect x="2887.1" y="1247.0" width="19.2" height="9.7" fill="#98c9fb"/><rect x="2909.5" y="1245.1" width="19.2" height="11.6" fill="#98c9fb"/><rect x="2932.0" y="1243.0" width="19.2" height="13.7" fill="#98c9fb"/><rect x="2954.4" y="1211.1" width="19.2" height="45.6" fill="#98c9fb"/><rect x="2976.9" y="1186.7" width="2.5" height="70.0" fill="#98c9fb"/><path d="M1630.8 1256.7 H2979.6" stroke="#5b6170" stroke-width="2.6"/><path d="M1966.9 1256.7 V1266.7" stroke="#5b6170" stroke-width="1.8"/><path d="M2303.9 1256.7 V1266.7" stroke="#5b6170" stroke-width="1.8"/><path d="M2640.8 1256.7 V1266.7" stroke="#5b6170" stroke-width="1.8"/><path d="M2977.6 1256.7 V1266.7" stroke="#5b6170" stroke-width="1.8"/></svg>
<span style="right:1396.4px;transform:scaleX(1.0157);transform-origin:100% 50%;top:1245.5px;font-size:20px;color:#25282d;">0</span>
<span style="right:1396.4px;transform:scaleX(1.0157);transform-origin:100% 50%;top:1188.9px;font-size:20px;color:#25282d;">100</span>
<span style="right:1396.4px;transform:scaleX(1.0157);transform-origin:100% 50%;top:1132.3px;font-size:20px;color:#25282d;">200</span>
<span style="right:1396.4px;transform:scaleX(1.0157);transform-origin:100% 50%;top:1075.7px;font-size:20px;color:#25282d;">300</span>
<span style="right:1396.4px;transform:scaleX(1.0157);transform-origin:100% 50%;top:1019.1px;font-size:20px;color:#25282d;">400</span>
<span style="right:1396.4px;transform:scaleX(1.0157);transform-origin:100% 50%;top:962.5px;font-size:20px;color:#25282d;">500</span>
<span style="left:1967.4px;transform:translateX(-50%) scaleX(0.9688);top:1269.1px;font-size:20px;color:#25282d;">10:30</span>
<span style="left:2304.4px;transform:translateX(-50%) scaleX(0.9688);top:1269.1px;font-size:20px;color:#25282d;">10:45</span>
<span style="left:2641.3px;transform:translateX(-50%);top:1269.1px;font-size:20px;color:#25282d;">11:00</span>
<span style="left:2978.1px;transform:translateX(-50%);top:1269.1px;font-size:20px;color:#25282d;">11:15</span>
<div style="left:1611.0px;top:1323.8px;width:22.0px;height:22.0px;background:#98c9fb;border-radius:4px;"></div>
<span style="left:1645.5px;transform:scaleX(0.9633);transform-origin:0 50%;top:1321.7px;font-size:23.5px;color:#25282d;">Hits</span>
<div style="left:1717.0px;top:1323.8px;width:22.0px;height:22.0px;background:#ee3b2a;border-radius:4px;"></div>
<span style="left:1752.0px;transform:scaleX(0.9612);transform-origin:0 50%;top:1321.7px;font-size:23.5px;color:#25282d;">Errors</span>
<span style="left:1550.0px;transform:scaleX(1.0211);transform-origin:0 50%;top:1386.1px;font-size:26px;color:#222a33;">Latency</span>
<svg style="left:2940.0px;top:1386.0px;" width="26" height="26" viewBox="0 0 26 26"><g fill="none" stroke="#696d70" stroke-width="2.4" stroke-linecap="butt" stroke-linejoin="miter"><path d="M1.2 8.8 V1.2 H8.8 M1.8 1.8 L9.8 9.8"/><g transform="translate(26 0) scale(-1 1)"><path d="M1.2 8.8 V1.2 H8.8 M1.8 1.8 L9.8 9.8"/></g><g transform="translate(0 26) scale(1 -1)"><path d="M1.2 8.8 V1.2 H8.8 M1.8 1.8 L9.8 9.8"/></g><g transform="translate(26 26) scale(-1 -1)"><path d="M1.2 8.8 V1.2 H8.8 M1.8 1.8 L9.8 9.8"/></g></g></svg>
<div style="left:1541.5px;top:1434.6px;width:1447.0px;height:2.0px;background:#e7e8ea;"></div>
<svg style="left:0.0px;top:1440.0px;" width="3021" height="360" viewBox="0 1440 3021 360"><path d="M1630.8 1515.8 H2978.6" stroke="#e7e8ea" stroke-width="1.4"/><path d="M1630.8 1633.3 H2978.6" stroke="#e7e8ea" stroke-width="1.4"/><path d="M1630.8 1750.7 H2979.6" stroke="#5b6170" stroke-width="2.6"/><path d="M1630.8 1751.1 L1630.8 1744.5 L1638.3 1744.4 L1645.8 1744.7 L1653.3 1744.3 L1660.8 1744.6 L1668.3 1744.5 L1675.8 1744.3 L1683.3 1744.6 L1690.8 1744.3 L1698.3 1749.3 L1705.8 1749.3 L1713.3 1744.3 L1720.8 1749.3 L1728.3 1744.8 L1735.8 1744.3 L1743.3 1744.4 L1750.8 1749.3 L1758.3 1749.3 L1765.8 1744.7 L1773.3 1744.5 L1780.8 1744.9 L1788.3 1744.3 L1795.8 1744.9 L1803.3 1744.5 L1810.8 1744.4 L1818.3 1744.3 L1825.8 1744.5 L1833.3 1744.8 L1840.8 1744.4 L1848.3 1744.7 L1855.8 1744.7 L1863.3 1744.5 L1870.8 1744.6 L1878.3 1744.3 L1885.8 1744.3 L1893.3 1749.3 L1900.8 1744.7 L1908.3 1744.5 L1915.8 1749.3 L1923.3 1744.7 L1930.8 1744.6 L1938.3 1744.5 L1945.8 1744.8 L1953.3 1744.7 L1960.8 1744.4 L1968.3 1744.7 L1975.8 1744.6 L1983.3 1744.9 L1990.8 1744.8 L1998.3 1744.5 L2005.8 1744.9 L2013.3 1744.3 L2020.8 1744.5 L2028.3 1744.8 L2035.8 1744.4 L2043.3 1744.6 L2050.8 1744.3 L2058.3 1744.7 L2065.8 1744.8 L2073.3 1744.7 L2080.8 1744.9 L2088.3 1744.5 L2095.8 1744.7 L2103.3 1749.3 L2110.8 1744.7 L2118.3 1744.6 L2125.8 1749.3 L2133.3 1744.9 L2140.8 1744.6 L2148.3 1744.7 L2155.8 1749.3 L2163.3 1744.7 L2170.8 1744.7 L2178.3 1744.9 L2185.8 1744.8 L2193.3 1744.4 L2200.8 1744.5 L2208.3 1744.7 L2215.8 1744.3 L2223.3 1744.6 L2230.8 1744.4 L2238.3 1744.3 L2245.8 1744.3 L2253.3 1744.8 L2260.8 1744.3 L2268.3 1744.4 L2275.8 1744.5 L2283.3 1744.9 L2290.8 1744.3 L2298.3 1744.6 L2305.8 1744.6 L2313.3 1744.9 L2320.8 1744.8 L2328.3 1749.3 L2335.8 1744.4 L2343.3 1744.5 L2350.8 1744.5 L2358.3 1744.9 L2365.8 1744.9 L2373.3 1744.4 L2380.8 1744.4 L2388.3 1744.4 L2395.8 1744.4 L2403.3 1744.6 L2410.8 1744.7 L2418.3 1749.3 L2425.8 1744.3 L2433.3 1744.5 L2440.8 1744.5 L2448.3 1744.6 L2455.8 1744.9 L2463.3 1744.7 L2470.8 1744.6 L2478.3 1744.7 L2485.8 1744.7 L2493.3 1744.3 L2500.8 1744.9 L2508.3 1749.3 L2515.8 1744.9 L2523.3 1744.8 L2530.8 1744.5 L2538.3 1744.5 L2545.8 1744.3 L2553.3 1744.7 L2560.8 1744.3 L2568.3 1744.3 L2575.8 1744.4 L2583.3 1744.4 L2590.8 1744.5 L2598.3 1744.3 L2605.8 1744.3 L2613.3 1744.4 L2620.8 1744.3 L2628.3 1744.5 L2635.8 1744.3 L2640.0 1744.6 L2640.0 1751.1Z" fill="#8cb1ed"/><path d="M1658 1749.1000000000001 H1695" stroke="#584bb9" stroke-width="2" opacity=".8"/><path d="M1765 1749.1000000000001 H1778" stroke="#f0c330" stroke-width="2" opacity=".8"/><path d="M1779 1749.1000000000001 H1792" stroke="#584bb9" stroke-width="2" opacity=".8"/><path d="M1840 1749.1000000000001 H1851" stroke="#f0c330" stroke-width="2" opacity=".8"/><path d="M1852 1749.1000000000001 H1871" stroke="#584bb9" stroke-width="2" opacity=".8"/><path d="M1871 1749.1000000000001 H1881" stroke="#f0c330" stroke-width="2" opacity=".8"/><path d="M1899 1749.1000000000001 H1908" stroke="#f0c330" stroke-width="2" opacity=".8"/><path d="M1929 1749.1000000000001 H1941" stroke="#584bb9" stroke-width="2" opacity=".8"/><path d="M1951 1749.1000000000001 H1980" stroke="#584bb9" stroke-width="2" opacity=".8"/><path d="M2030 1749.1000000000001 H2050" stroke="#584bb9" stroke-width="2" opacity=".8"/><path d="M2066 1749.1000000000001 H2078" stroke="#f0c330" stroke-width="2" opacity=".8"/><path d="M2180 1749.1000000000001 H2215" stroke="#584bb9" stroke-width="2" opacity=".8"/><path d="M2238 1749.1000000000001 H2250" stroke="#f0c330" stroke-width="2" opacity=".8"/><path d="M2290 1749.1000000000001 H2318" stroke="#584bb9" stroke-width="2" opacity=".8"/><path d="M2352 1749.1000000000001 H2362" stroke="#f0c330" stroke-width="2" opacity=".8"/><path d="M2400 1749.1000000000001 H2432" stroke="#584bb9" stroke-width="2" opacity=".8"/><path d="M2470 1749.1000000000001 H2481" stroke="#f0c330" stroke-width="2" opacity=".8"/><path d="M2530 1749.1000000000001 H2560" stroke="#584bb9" stroke-width="2" opacity=".8"/><path d="M2596 1749.1000000000001 H2606" stroke="#f0c330" stroke-width="2" opacity=".8"/><path d="M1630.8 1744.5 L1638.3 1744.4 L1645.8 1744.7 L1653.3 1744.3 L1660.8 1744.6 L1668.3 1744.5 L1675.8 1744.3 L1683.3 1744.6 L1690.8 1744.3 L1698.3 1749.3 L1705.8 1749.3 L1713.3 1744.3 L1720.8 1749.3 L1728.3 1744.8 L1735.8 1744.3 L1743.3 1744.4 L1750.8 1749.3 L1758.3 1749.3 L1765.8 1744.7 L1773.3 1744.5 L1780.8 1744.9 L1788.3 1744.3 L1795.8 1744.9 L1803.3 1744.5 L1810.8 1744.4 L1818.3 1744.3 L1825.8 1744.5 L1833.3 1744.8 L1840.8 1744.4 L1848.3 1744.7 L1855.8 1744.7 L1863.3 1744.5 L1870.8 1744.6 L1878.3 1744.3 L1885.8 1744.3 L1893.3 1749.3 L1900.8 1744.7 L1908.3 1744.5 L1915.8 1749.3 L1923.3 1744.7 L1930.8 1744.6 L1938.3 1744.5 L1945.8 1744.8 L1953.3 1744.7 L1960.8 1744.4 L1968.3 1744.7 L1975.8 1744.6 L1983.3 1744.9 L1990.8 1744.8 L1998.3 1744.5 L2005.8 1744.9 L2013.3 1744.3 L2020.8 1744.5 L2028.3 1744.8 L2035.8 1744.4 L2043.3 1744.6 L2050.8 1744.3 L2058.3 1744.7 L2065.8 1744.8 L2073.3 1744.7 L2080.8 1744.9 L2088.3 1744.5 L2095.8 1744.7 L2103.3 1749.3 L2110.8 1744.7 L2118.3 1744.6 L2125.8 1749.3 L2133.3 1744.9 L2140.8 1744.6 L2148.3 1744.7 L2155.8 1749.3 L2163.3 1744.7 L2170.8 1744.7 L2178.3 1744.9 L2185.8 1744.8 L2193.3 1744.4 L2200.8 1744.5 L2208.3 1744.7 L2215.8 1744.3 L2223.3 1744.6 L2230.8 1744.4 L2238.3 1744.3 L2245.8 1744.3 L2253.3 1744.8 L2260.8 1744.3 L2268.3 1744.4 L2275.8 1744.5 L2283.3 1744.9 L2290.8 1744.3 L2298.3 1744.6 L2305.8 1744.6 L2313.3 1744.9 L2320.8 1744.8 L2328.3 1749.3 L2335.8 1744.4 L2343.3 1744.5 L2350.8 1744.5 L2358.3 1744.9 L2365.8 1744.9 L2373.3 1744.4 L2380.8 1744.4 L2388.3 1744.4 L2395.8 1744.4 L2403.3 1744.6 L2410.8 1744.7 L2418.3 1749.3 L2425.8 1744.3 L2433.3 1744.5 L2440.8 1744.5 L2448.3 1744.6 L2455.8 1744.9 L2463.3 1744.7 L2470.8 1744.6 L2478.3 1744.7 L2485.8 1744.7 L2493.3 1744.3 L2500.8 1744.9 L2508.3 1749.3 L2515.8 1744.9 L2523.3 1744.8 L2530.8 1744.5 L2538.3 1744.5 L2545.8 1744.3 L2553.3 1744.7 L2560.8 1744.3 L2568.3 1744.3 L2575.8 1744.4 L2583.3 1744.4 L2590.8 1744.5 L2598.3 1744.3 L2605.8 1744.3 L2613.3 1744.4 L2620.8 1744.3 L2628.3 1744.5 L2635.8 1744.3 L2640.0 1744.6" fill="none" stroke="#729ee9" stroke-width="3.8" stroke-linejoin="round"/><path d="M2640.1 1749.7 L2946.2 1749.7 L2954.4 1746.7 L2961.5 1749.7 L2978.1 1749.7" fill="none" stroke="#3e97e6" stroke-width="2.4" stroke-linejoin="round" stroke-linecap="round" opacity="0.5"/><path d="M2640.7 1745.6 L2647.9 1591.4 L2653.0 1598.5 L2662.2 1749.7 L2669.7 1720.1 L2677.1 1738.5 L2684.6 1724.2 L2692.4 1680.2 L2700.0 1730.3 L2707.1 1611.8 L2714.7 1723.2 L2722.0 1729.7 L2729.6 1726.2 L2737.0 1636.9 L2744.5 1712.9 L2752.1 1679.2 L2759.4 1661.9 L2766.8 1563.8 L2774.1 1550.5 L2781.7 1539.7 L2789.3 1553.2 L2797.0 1546.4 L2804.6 1561.7 L2811.9 1749.7 L2924.1 1749.7 L2931.9 1655.7 L2941.1 1541.3 L2948.2 1549.5 L2955.4 1552.5 L2961.5 1643.5 L2968.7 1745.6 L2978.1 1748.1" fill="none" stroke="#584bb9" stroke-width="3.3" stroke-linejoin="round" stroke-linecap="round" opacity="1"/><path d="M2640.1 1744.8 L2646.8 1547.4 L2651.5 1563.8 L2654.6 1586.3 L2662.2 1696.6 L2669.7 1520.9 L2677.1 1665.9 L2684.6 1555.6 L2692.4 1535.2 L2700.0 1696.6 L2707.1 1553.6 L2714.7 1545.4 L2722.0 1534.1 L2729.6 1564.8 L2737.0 1537.2 L2744.5 1539.3 L2752.1 1542.3 L2759.4 1567.9 L2766.8 1531.1 L2774.1 1522.9 L2781.7 1526.6 L2789.3 1522.9 L2797.0 1522.9 L2804.6 1526.0 L2811.9 1547.4 L2819.5 1749.7 L2916.6 1749.7 L2925.8 1704.8 L2933.5 1580.1 L2940.1 1535.2 L2947.2 1520.9 L2957.4 1520.5 L2962.1 1533.1 L2968.3 1745.6 L2978.1 1746.9" fill="none" stroke="#f0c330" stroke-width="3.3" stroke-linejoin="round" stroke-linecap="round" opacity="1"/><path d="M2638.5 1749.3 L2639.7 1743.6 L2646.8 1543.3 L2654.6 1561.7 L2662.2 1690.5 L2669.7 1518.8 L2677.1 1651.6 L2684.6 1551.5 L2692.4 1530.1 L2700.0 1527.0 L2707.1 1549.5 L2714.7 1530.1 L2722.0 1526.6 L2729.6 1526.6 L2737.0 1529.7 L2752.1 1529.7 L2759.4 1565.8 L2766.8 1530.1 L2774.1 1518.8 L2797.0 1518.8 L2804.6 1515.8 L2811.9 1528.0 L2819.5 1582.2 L2826.7 1749.7 L2857.3 1749.7 L2864.5 1745.6 L2871.6 1749.7 L2916.6 1749.7 L2924.1 1704.8 L2931.9 1580.1 L2939.0 1535.2 L2946.6 1517.8 L2954.0 1516.4 L2961.5 1518.8 L2968.7 1745.6 L2978.1 1745.6" fill="none" stroke="#7ea8ee" stroke-width="3.5" stroke-linejoin="round" stroke-linecap="round" opacity="1"/><path d="M2668 1751.1000000000001 H2906 M2961 1751.1000000000001 H2979.6" stroke="#56657f" stroke-width="2"/><path d="M1966.9 1750.7 V1760.7" stroke="#5b6170" stroke-width="1.8"/><path d="M2303.9 1750.7 V1760.7" stroke="#5b6170" stroke-width="1.8"/><path d="M2640.8 1750.7 V1760.7" stroke="#5b6170" stroke-width="1.8"/><path d="M2977.6 1750.7 V1760.7" stroke="#5b6170" stroke-width="1.8"/></svg>
<span style="right:1396.8px;transform:scaleX(1.0157);transform-origin:100% 50%;top:1504.6px;font-size:20px;color:#25282d;">10</span>
<span style="right:1396.8px;transform:scaleX(1.0157);transform-origin:100% 50%;top:1622.1px;font-size:20px;color:#25282d;">5</span>
<span style="right:1396.8px;transform:scaleX(1.0157);transform-origin:100% 50%;top:1739.5px;font-size:20px;color:#25282d;">0</span>
<span style="left:1967.4px;transform:translateX(-50%) scaleX(0.9688);top:1763.1px;font-size:20px;color:#25282d;">10:30</span>
<span style="left:2304.4px;transform:translateX(-50%) scaleX(0.9688);top:1763.1px;font-size:20px;color:#25282d;">10:45</span>
<span style="left:2641.3px;transform:translateX(-50%);top:1763.1px;font-size:20px;color:#25282d;">11:00</span>
<span style="left:2978.1px;transform:translateX(-50%);top:1763.1px;font-size:20px;color:#25282d;">11:15</span>
<span style="left:1559.5px;top:1629px;font-size:20px;color:#8f9196;transform:translate(-50%,-50%) rotate(-90deg);letter-spacing:.4px;">Seconds</span>
<div style="left:1611.0px;top:1818.0px;width:22.0px;height:22.0px;background:#2f9aea;border-radius:4px;"></div>
<span style="left:1645.5px;transform:scaleX(0.9562);transform-origin:0 50%;top:1816.0px;font-size:23.5px;color:#25282d;">p50</span>
<div style="left:1716.0px;top:1818.0px;width:22.0px;height:22.0px;background:#5a49c0;border-radius:4px;"></div>
<span style="left:1750.5px;transform:scaleX(0.9562);transform-origin:0 50%;top:1816.0px;font-size:23.5px;color:#25282d;">p75</span>
<div style="left:1820.0px;top:1818.0px;width:22.0px;height:22.0px;background:#f0c22b;border-radius:4px;"></div>
<span style="left:1854.5px;transform:scaleX(0.9562);transform-origin:0 50%;top:1816.0px;font-size:23.5px;color:#25282d;">p90</span>
<div style="left:1924.5px;top:1818.0px;width:22.0px;height:22.0px;background:#7eaaf8;border-radius:4px;"></div>
<span style="left:1959.0px;transform:scaleX(0.9562);transform-origin:0 50%;top:1816.0px;font-size:23.5px;color:#25282d;">p95</span>
<div style="left:2030.0px;top:1818.0px;width:22.0px;height:22.0px;border:2px solid #a59bdc;border-radius:4px;background:#fff;"></div>
<span style="left:2064.5px;transform:scaleX(0.9562);transform-origin:0 50%;top:1816.0px;font-size:23.5px;color:#25282d;">p99</span>
<div style="left:2135.0px;top:1818.0px;width:22.0px;height:22.0px;border:2px solid #f5e2a0;border-radius:4px;background:#fff;"></div>
<span style="left:2169.5px;transform:scaleX(0.9607);transform-origin:0 50%;top:1816.0px;font-size:23.5px;color:#25282d;">p99.9</span>
<div style="left:2258.0px;top:1818.0px;width:22.0px;height:22.0px;border:2px solid #4b8fd0;border-radius:4px;background:#fff;"></div>
<span style="left:2292.5px;transform:scaleX(0.9796);transform-origin:0 50%;top:1816.0px;font-size:23.5px;color:#25282d;">Max</span>
<span style="left:1550.0px;transform:scaleX(1.0172);transform-origin:0 50%;top:1880.1px;font-size:26px;color:#222a33;">Errors</span>
<svg style="left:2940.0px;top:1879.5px;" width="26" height="26" viewBox="0 0 26 26"><g fill="none" stroke="#696d70" stroke-width="2.4" stroke-linecap="butt" stroke-linejoin="miter"><path d="M1.2 8.8 V1.2 H8.8 M1.8 1.8 L9.8 9.8"/><g transform="translate(26 0) scale(-1 1)"><path d="M1.2 8.8 V1.2 H8.8 M1.8 1.8 L9.8 9.8"/></g><g transform="translate(0 26) scale(1 -1)"><path d="M1.2 8.8 V1.2 H8.8 M1.8 1.8 L9.8 9.8"/></g><g transform="translate(26 26) scale(-1 -1)"><path d="M1.2 8.8 V1.2 H8.8 M1.8 1.8 L9.8 9.8"/></g></g></svg>
</body></html>
